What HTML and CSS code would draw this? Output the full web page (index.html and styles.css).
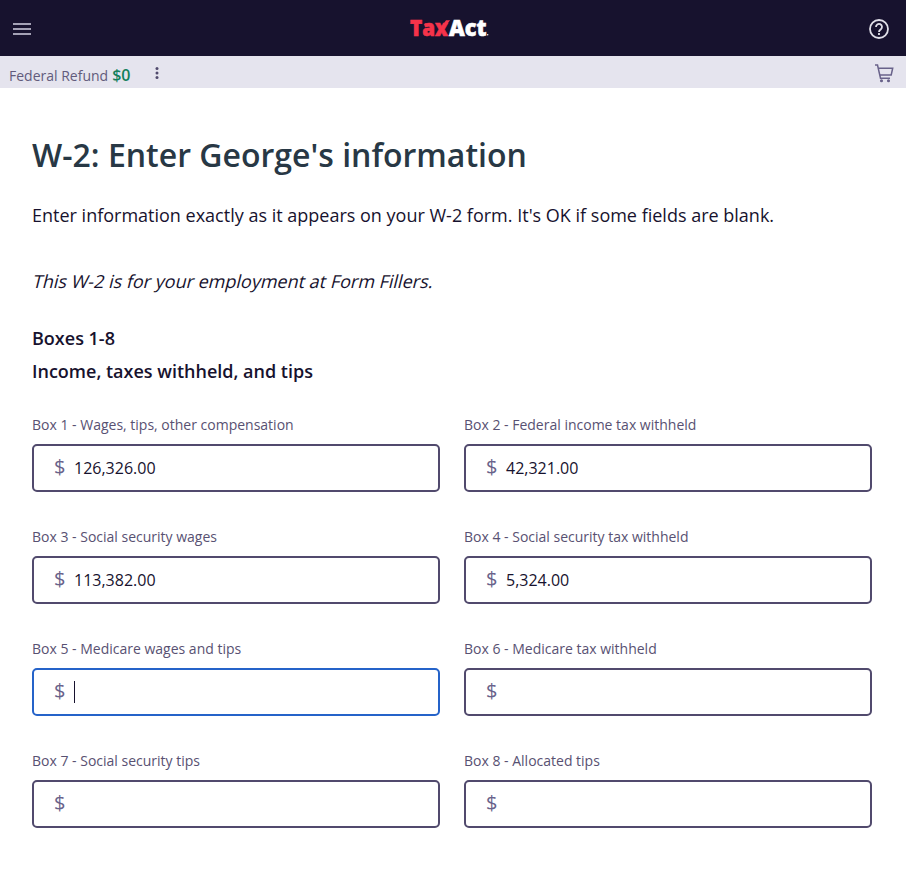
FILE: index.html
```html
<!DOCTYPE html>
<html lang="en">
<head>
<meta charset="utf-8">
<title>W-2 - TaxAct</title>
<link rel="stylesheet" href="styles.css">
</head>
<body>
<header class="topbar">
  <svg class="menu" width="18" height="12" viewBox="0 0 18 12"><path d="M0 1h18M0 6h18M0 11h18" stroke="#a4a1b5" stroke-width="2"/></svg>
  <svg class="logo" width="82" height="34" viewBox="0 0 82 34">
    <text class="logo-text logo-red" x="0" y="23.500" textLength="38" lengthAdjust="spacingAndGlyphs">Tax</text>
    <path d="M30 17L36 8.300h4.200L33 17z" fill="#f5334a"/>
    <text class="logo-text logo-white" x="39" y="23.500" textLength="37.500" lengthAdjust="spacingAndGlyphs">Act</text>
    <circle cx="77.700" cy="22.800" r=".7" fill="#fff"/>
  </svg>
  <svg class="help" width="20" height="20" viewBox="0 0 20 20" fill="none" stroke="#e0dfe8" stroke-width="1.800"><circle cx="10" cy="10" r="9"/><path d="M7 8a3 3 0 1 1 4.900 2.200C10.700 11.200 10 11.600 10 13"/><path d="M10 14v2"/></svg>
</header>
<div class="status">
  <span class="refund">Federal Refund</span><span class="amount">$0</span>
  <svg class="dots" width="4" height="12" viewBox="0 0 4 12" fill="#514a6d"><circle cx="2" cy="1.500" r="1.500"/><circle cx="2" cy="6" r="1.500"/><circle cx="2" cy="10.500" r="1.500"/></svg>
  <svg class="cart" width="20" height="19" viewBox="0 0 20 19" fill="none" stroke="#69628a" stroke-width="1.500"><path d="M1 1h2.500l3 13.200H16M4.200 4.200h14.500l-1.500 6.800H5.700"/><circle cx="7.500" cy="16.800" r=".8"/><circle cx="14.500" cy="16.800" r=".8"/></svg>
</div>
<main class="content">
  <h1>W-2: Enter George's information</h1>
  <p class="intro">Enter information exactly as it appears on your W-2 form. It's OK if some fields are blank.</p>
  <p class="employer">This W-2 is for your employment at Form Fillers.</p>
  <h2>Boxes 1-8</h2>
  <h2>Income, taxes withheld, and tips</h2>
  <form class="grid">
    <div class="field"><span class="label">Box 1 - Wages, tips, other compensation</span><div class="input"><span class="dollar">$</span><span>126,326.00</span></div></div>
    <div class="field"><span class="label">Box 2 - Federal income tax withheld</span><div class="input"><span class="dollar">$</span><span>42,321.00</span></div></div>
    <div class="field"><span class="label">Box 3 - Social security wages</span><div class="input"><span class="dollar">$</span><span>113,382.00</span></div></div>
    <div class="field"><span class="label">Box 4 - Social security tax withheld</span><div class="input"><span class="dollar">$</span><span>5,324.00</span></div></div>
    <div class="field"><span class="label">Box 5 - Medicare wages and tips</span><div class="input focused"><span class="dollar">$</span><span class="caret"></span></div></div>
    <div class="field"><span class="label">Box 6 - Medicare tax withheld</span><div class="input"><span class="dollar">$</span></div></div>
    <div class="field"><span class="label">Box 7 - Social security tips</span><div class="input"><span class="dollar">$</span></div></div>
    <div class="field"><span class="label">Box 8 - Allocated tips</span><div class="input"><span class="dollar">$</span></div></div>
  </form>
</main>
</body>
</html>
```
FILE: styles.css
```css
* { box-sizing: border-box; }
body { margin: 0; background: #fff; color: #17122e; font-family: "Open Sans", sans-serif; }
svg { display: block; flex: none; }
.topbar { height: 56px; background: #17122e; display: grid; grid-template-columns: 1fr 82px 1fr; align-items: center; padding: 2px 17px 0 13px; }
.logo { overflow: visible; }
.help { justify-self: end; }
.logo-text { font: 800 22px "Open Sans", sans-serif; stroke-width: .6px; }
.logo-red { fill: #f5334a; stroke: #f5334a; }
.logo-white { fill: #fff; stroke: #fff; }
.status { height: 32px; background: #e5e4ee; display: flex; align-items: center; padding: 0 12px 0 9px; color: #625b7c; }
.refund { font-size: 14px; line-height: 20px; padding-top: 7px; }
.amount { font-size: 16px; line-height: 20px; font-weight: 600; color: #13805c; margin-left: 4px; padding-top: 6px; }
.dots { margin: 2px 0 0 25px; }
.cart { margin: 3px 0 0 auto; }
.content { padding: 43px 34px 0 32px; }
h1 { margin: 0; font-size: 32px; line-height: 48px; font-weight: 600; color: #283845; }
p { margin: 0; font-size: 18px; line-height: 28px; }
.intro { margin-top: 22px; }
.employer { margin-top: 38px; width: max-content; transform: skewX(-14deg); transform-origin: 0 20px; }
h2 { margin: 0; font-size: 18px; line-height: 33px; font-weight: 600; }
.employer + h2 { margin-top: 27px; }
.grid { margin-top: 27px; display: grid; grid-template-columns: 1fr 1fr; gap: 32px 24px; }
.field { height: 80px; }
.label { display: block; height: 29px; font-size: 14px; line-height: 20px; color: #585172; }
.input { height: 48px; border: 2px solid #514a6d; border-radius: 5px; display: flex; align-items: center; padding-left: 20px; font-size: 16px; }
.dollar { width: 20px; font-size: 20px; line-height: 26px; padding-bottom: 2px; color: #69628a; }
.focused { border-color: #2563c9; }
.caret { width: 1px; height: 22px; background: #17122e; }
```
